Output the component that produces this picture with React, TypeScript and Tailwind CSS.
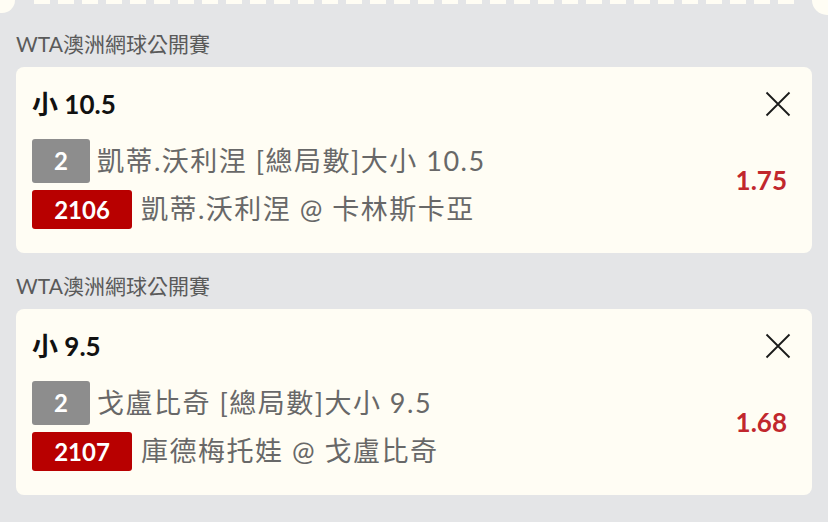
import React from 'react';

type Bet = {
  league: string;
  title: string;
  market: string;
  matchNo: string;
  match: string;
  odds: string;
};

const BETS: Bet[] = [
  {
    league: 'WTA澳洲網球公開賽',
    title: '小 10.5',
    market: '凱蒂.沃利涅 [總局數]大小 10.5',
    matchNo: '2106',
    match: '凱蒂.沃利涅 @ 卡林斯卡亞',
    odds: '1.75',
  },
  {
    league: 'WTA澳洲網球公開賽',
    title: '小 9.5',
    market: '戈盧比奇 [總局數]大小 9.5',
    matchNo: '2107',
    match: '庫德梅托娃 @ 戈盧比奇',
    odds: '1.68',
  },
];

const FONT = "font-['Lato','Noto_Sans_CJK_TC',sans-serif]";

function CloseIcon() {
  return (
    <svg width="26" height="26" viewBox="0 0 26 26" fill="none">
      <path d="M1.5 1.5 L24.5 24.5 M24.5 1.5 L1.5 24.5" stroke="#1a1a1a" strokeWidth="1.8" />
    </svg>
  );
}

function BetCard({ bet }: { bet: Bet }) {
  return (
    <div>
      <div className="text-[21px] leading-[26px] text-[#5a5a5a] px-4 mb-[10px]">{bet.league}</div>
      <div className="mx-4 bg-[#fffdf4] rounded-lg pl-4 pr-[21px] pt-[21px] pb-[24px]">
        <div className="flex items-center justify-between h-[32px]">
          <span className="text-[26px] font-bold text-[#111]">{bet.title}</span>
          <CloseIcon />
        </div>
        <div className="flex items-center justify-between mt-[19px]">
          <div className="flex flex-col gap-[7px]">
            <div className="flex items-center h-[44px]">
              <span className="h-[44px] min-w-[58px] px-[22px] flex items-center justify-center rounded-[3px] bg-[#8d8d8d] text-white font-bold text-[24px]">
                2
              </span>
              <span className="ml-[7px] text-[27px] tracking-[1.5px] text-[#686868]">{bet.market}</span>
            </div>
            <div className="flex items-center h-[39px]">
              <span className="h-[39px] w-[100px] flex items-center justify-center rounded-[3px] bg-[#b80000] text-white font-bold text-[24px]">
                {bet.matchNo}
              </span>
              <span className="ml-[9px] text-[27px] tracking-[1.5px] text-[#686868]">{bet.match}</span>
            </div>
          </div>
          <span className="mr-[4px] pb-[8px] text-[26px] font-bold text-[#c1272d]">{bet.odds}</span>
        </div>
      </div>
    </div>
  );
}

export default function App() {
  return (
    <div className={`w-[828px] h-[522px] bg-[#e4e5e7] overflow-hidden ${FONT}`}>
      {/* torn edge of the card above */}
      <div className="flex items-start justify-between h-[31px]">
        <span className="w-[15px] h-[13px] bg-[#fffdf4] rounded-br-full" />
        <div className="flex gap-[8px]">
          {Array.from({ length: 32 }).map((_, i) => (
            <span key={i} className="w-[16px] h-[4px] bg-[#fffdf4]" />
          ))}
        </div>
        <span className="w-[16px] h-[15px] bg-[#fffdf4] rounded-bl-full" />
      </div>
      <div className="flex flex-col gap-[20px]">
        {BETS.map((b, i) => (
          <BetCard key={i} bet={b} />
        ))}
      </div>
    </div>
  );
}
